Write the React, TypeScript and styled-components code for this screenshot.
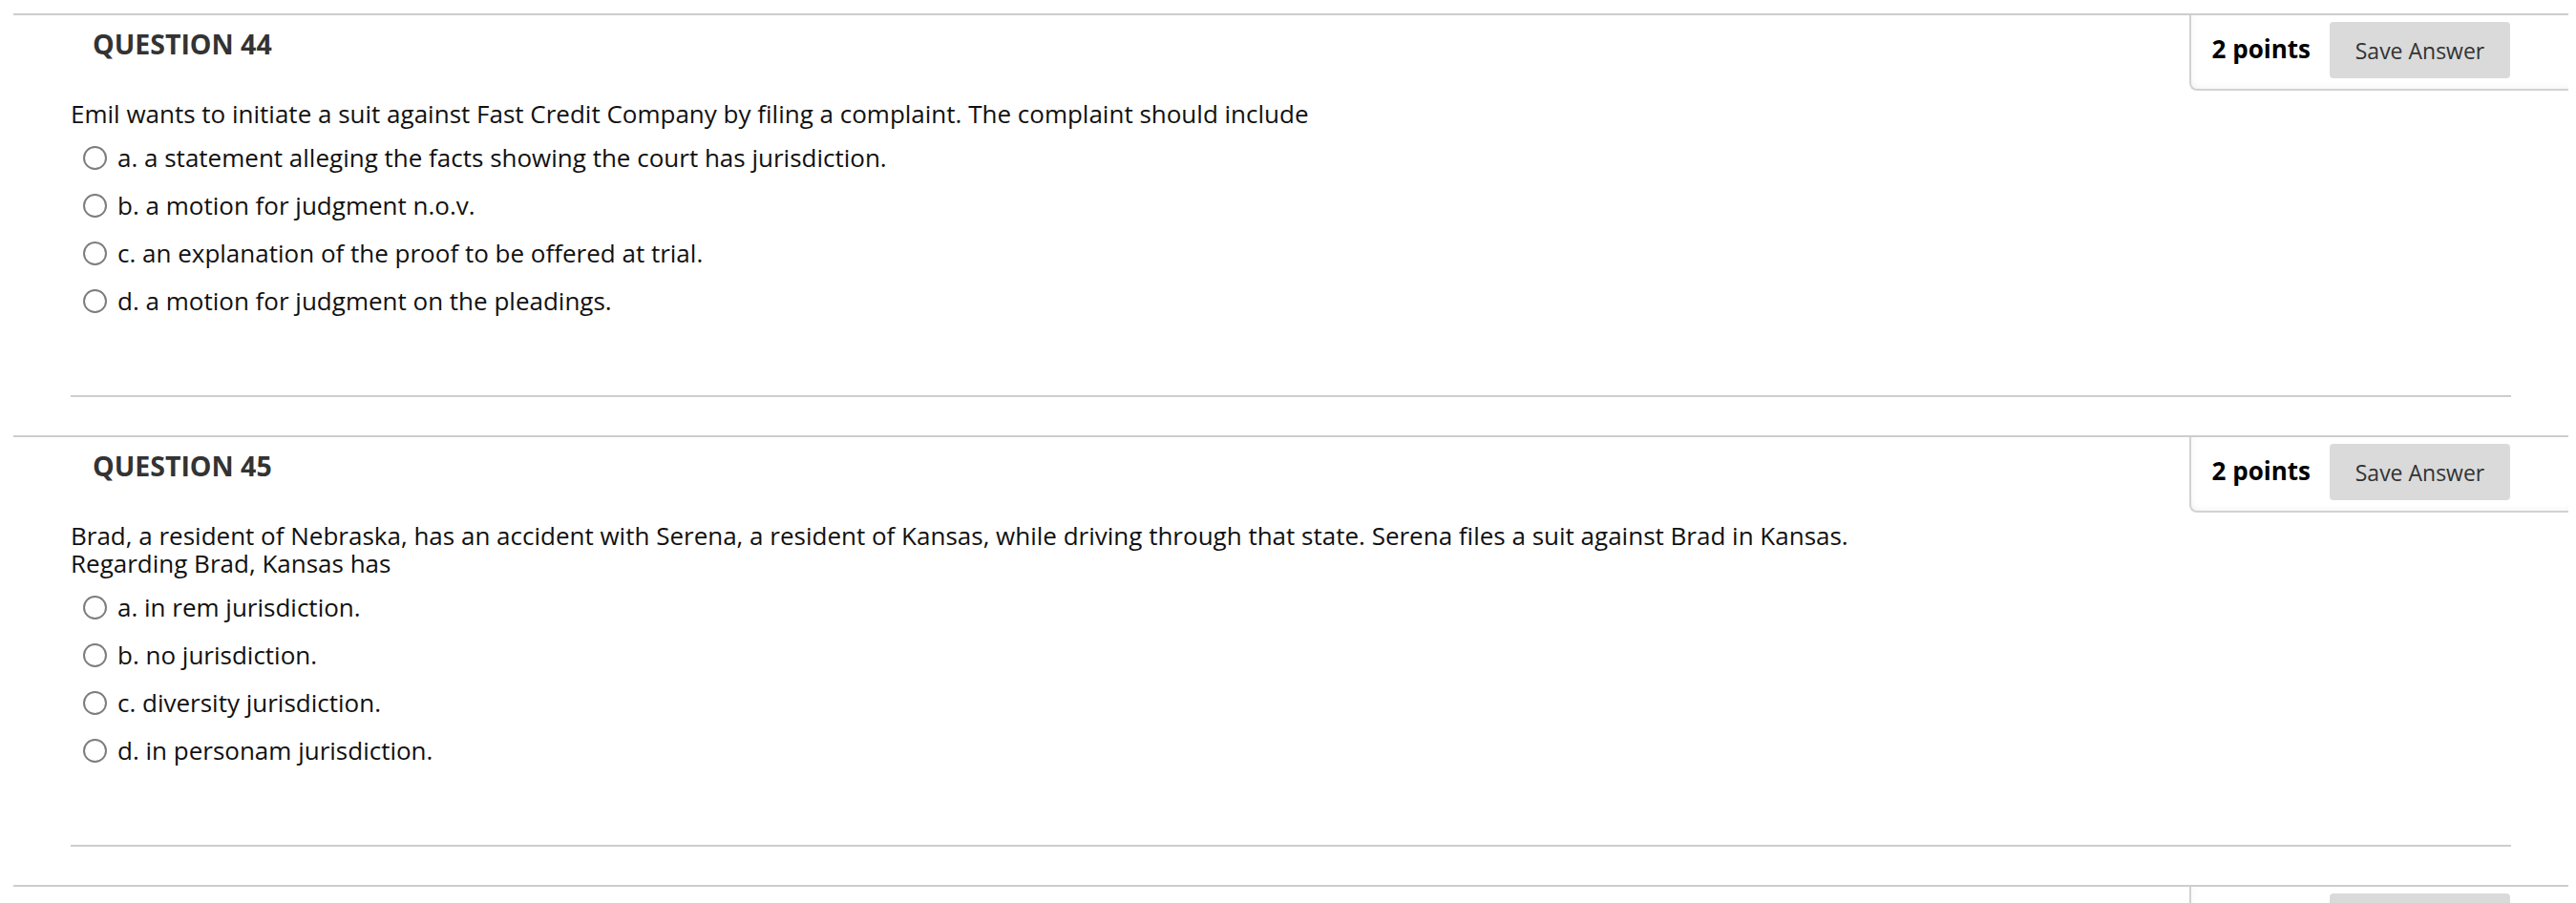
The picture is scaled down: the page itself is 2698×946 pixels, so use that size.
import React from "react";
import styled, { createGlobalStyle } from "styled-components";

const GlobalStyle = createGlobalStyle`
  html, body {
    margin: 0;
    padding: 0;
    background: #ffffff;
  }
  body {
    font-family: "Open Sans", "Noto Sans", sans-serif;
    color: #111111;
  }
`;

const Page = styled.div`
  padding: 14px 8px 0 14px;
`;

const QuestionBlock = styled.section`
  border-top: 2px solid #cdcdcd;
  & + & {
    margin-top: 40px;
  }
`;

const Header = styled.div`
  display: flex;
  justify-content: space-between;
  align-items: flex-start;
`;

const Title = styled.h3`
  margin: 0;
  padding: 13px 0 0 83px;
  font-size: 28.5px;
  line-height: 34px;
  font-weight: 700;
  color: #333333;
`;

const PointsBox = styled.div`
  box-sizing: border-box;
  width: 397px;
  display: flex;
  align-items: center;
  justify-content: flex-end;
  gap: 20px;
  padding: 7px 61px 11px 0;
  border-left: 2px solid #d2d2d2;
  border-bottom: 2px solid #d2d2d2;
  border-bottom-left-radius: 8px;
  box-shadow: inset 0 -6px 8px -6px rgba(0, 0, 0, 0.06),
    inset 6px 0 8px -6px rgba(0, 0, 0, 0.05);
`;

const Points = styled.span`
  font-size: 26px;
  font-weight: 700;
  color: #000000;
  margin-top: -4px;
`;

const SaveButton = styled.button`
  width: 189px;
  height: 59px;
  border: none;
  border-radius: 4px;
  background: #dadada;
  color: #333333;
  font-family: "Open Sans", "Noto Sans", sans-serif;
  font-size: 23px;
  padding: 0;
`;

const Prompt = styled.div`
  margin-top: 10px;
  padding-left: 60px;
  font-size: 26px;
  line-height: 29px;
  color: #111111;
`;

const Options = styled.div`
  margin-top: 6px;
  padding-left: 60px;
`;

const OptionRow = styled.label`
  display: flex;
  align-items: center;
  gap: 11px;
  height: 50px;
  padding-left: 13px;
  font-size: 26px;
  color: #111111;
`;

const Radio = styled.input`
  appearance: none;
  margin: 0;
  box-sizing: border-box;
  width: 25px;
  height: 25px;
  border: 2px solid #7d7d7d;
  border-radius: 50%;
  background: #ffffff;
  flex: none;
`;

const Separator = styled.hr`
  margin: 74px 60px 0 60px;
  border: none;
  border-top: 2px solid #cdcdcd;
  height: 0;
`;

type Question = {
  number: number;
  points: string;
  prompt: string[];
  options: string[];
};

const questions: Question[] = [
  {
    number: 44,
    points: "2 points",
    prompt: [
      "Emil wants to initiate a suit against Fast Credit Company by filing a complaint. The complaint should include",
    ],
    options: [
      "a. a statement alleging the facts showing the court has jurisdiction.",
      "b. a motion for judgment n.o.v.",
      "c. an explanation of the proof to be offered at trial.",
      "d. a motion for judgment on the pleadings.",
    ],
  },
  {
    number: 45,
    points: "2 points",
    prompt: [
      "Brad, a resident of Nebraska, has an accident with Serena, a resident of Kansas, while driving through that state. Serena files a suit against Brad in Kansas.",
      "Regarding Brad, Kansas has",
    ],
    options: [
      "a. in rem jurisdiction.",
      "b. no jurisdiction.",
      "c. diversity jurisdiction.",
      "d. in personam jurisdiction.",
    ],
  },
];

function QuestionItem({ q }: { q: Question }) {
  return (
    <QuestionBlock>
      <Header>
        <Title>QUESTION {q.number}</Title>
        <PointsBox>
          <Points>{q.points}</Points>
          <SaveButton type="button">Save Answer</SaveButton>
        </PointsBox>
      </Header>
      <Prompt>
        {q.prompt.map((line, i) => (
          <React.Fragment key={i}>
            {i > 0 && <br />}
            {line}
          </React.Fragment>
        ))}
      </Prompt>
      <Options>
        {q.options.map((opt) => (
          <OptionRow key={opt}>
            <Radio type="radio" name={`q${q.number}`} />
            <span>{opt}</span>
          </OptionRow>
        ))}
      </Options>
      <Separator />
    </QuestionBlock>
  );
}

export default function App() {
  return (
    <>
      <GlobalStyle />
      <Page>
        {questions.map((q) => (
          <QuestionItem key={q.number} q={q} />
        ))}
        <QuestionBlock>
          <Header>
            <Title>QUESTION 46</Title>
            <PointsBox>
              <Points>2 points</Points>
              <SaveButton type="button">Save Answer</SaveButton>
            </PointsBox>
          </Header>
        </QuestionBlock>
      </Page>
    </>
  );
}
